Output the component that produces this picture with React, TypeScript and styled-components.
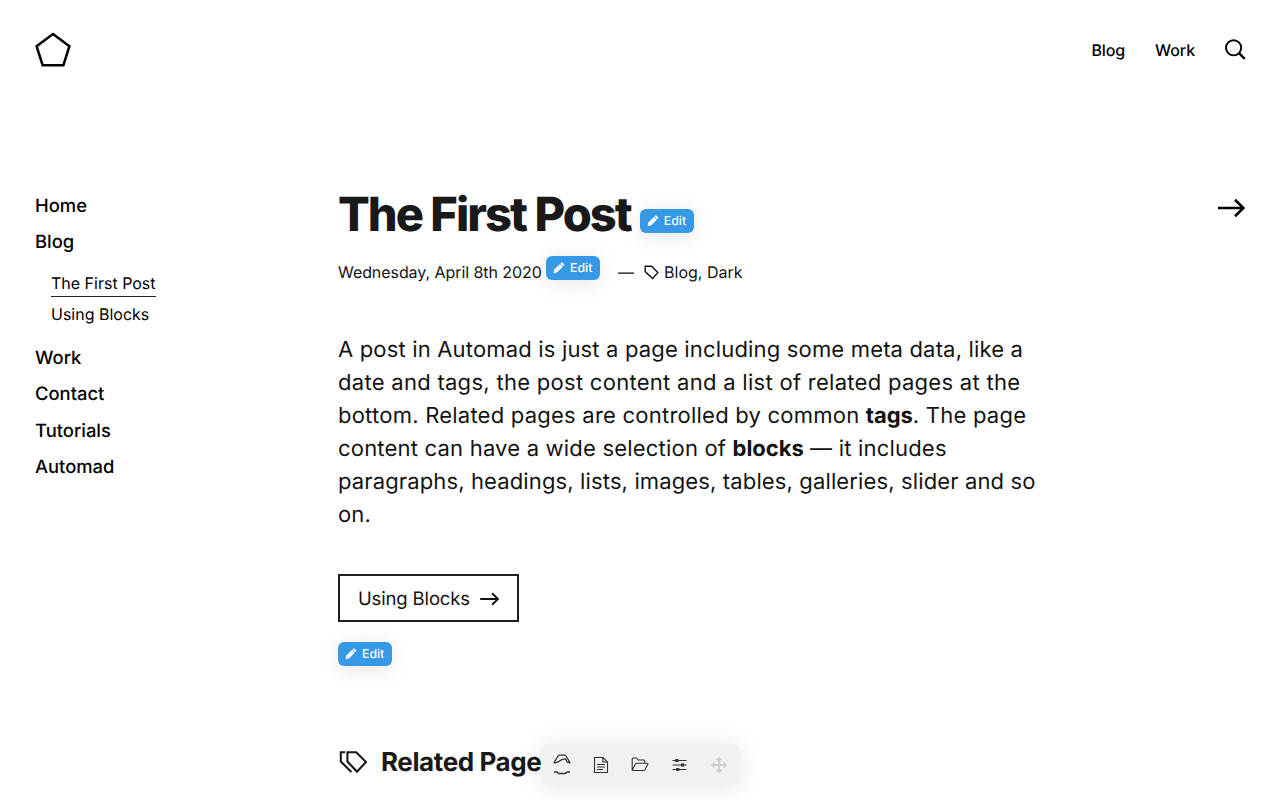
import React from "react";
import styled, { createGlobalStyle } from "styled-components";

const GlobalStyle = createGlobalStyle`
  *, *::before, *::after { box-sizing: border-box; }
  html, body { margin: 0; padding: 0; background: #fff; }
  body {
    font-family: Inter, "Liberation Sans", sans-serif;
    color: #121212;
    overflow: hidden;
    text-rendering: geometricPrecision;
    -webkit-font-smoothing: antialiased;
  }
  svg { display: block; flex: none; }
  h1, h2, p { margin: 0; }
  a { color: inherit; text-decoration: none; }
`;

const Page = styled.div`
  position: relative;
  height: 800px;
  overflow: hidden;
`;

const Navbar = styled.header`
  display: flex;
  align-items: center;
  justify-content: space-between;
  height: 99px;
  padding: 0 34px 0 35px;
`;

const NavLinks = styled.nav`
  display: flex;
  align-items: center;
  gap: 30px;
  font-size: 16px;
  font-weight: 450;
  letter-spacing: -0.1px;
  color: #000;

  a { padding-top: 1px; }
`;

const Columns = styled.div`
  display: flex;
  padding: 86px 34px 0 35px;
`;

const Sidebar = styled.nav`
  width: 303px;
  flex: none;
  padding-top: 3px;
  color: #000;
`;

const SideLink = styled.a`
  display: block;
  height: 36.4px;
  line-height: 37px;
  font-size: 18.4px;
  font-weight: 450;
`;

const SubList = styled.div`
  display: flex;
  flex-direction: column;
  align-items: flex-start;
  gap: 4px;
  padding: 9px 0 12px 16px;
`;

const SubLink = styled.a<{ $active?: boolean }>`
  height: 27px;
  line-height: 27px;
  font-size: 16px;
  border-bottom: 1px solid ${(p) => (p.$active ? "#222" : "transparent")};
`;

const Article = styled.main`
  width: 710px;
  flex: none;
`;

const Next = styled.a`
  margin-left: auto;
  padding-top: 12.5px;
  color: #000;
`;

const TitleRow = styled.div`
  display: flex;
  gap: 9px;
  height: 60px;
`;

const Title = styled.h1`
  font-size: 47px;
  line-height: 60px;
  font-weight: 800;
  letter-spacing: -1.95px;
  white-space: nowrap;
  color: #191919;
`;

const EditButton = styled.button<{ $top?: number }>`
  display: flex;
  align-items: center;
  gap: 5px;
  width: 54px;
  height: 24px;
  flex: none;
  margin: ${(p) => p.$top ?? 0}px 0 0;
  padding: 0 0 0 7px;
  border: 0;
  border-radius: 6px;
  background: #3699e5;
  box-shadow: 0 3px 22px rgba(0, 0, 0, 0.11);
  color: #fff;
  font: 500 12.3px/24px Inter, sans-serif;
  text-rendering: inherit;
`;

const Meta = styled.div`
  display: flex;
  height: 54px;
  font-size: 16px;
  line-height: 54px;
  white-space: nowrap;
`;

const PostDate = styled.span`
  letter-spacing: -0.07px;
`;

const Dash = styled.span`
  margin: 0 10px 0 18px;
`;

const Tags = styled.span`
  display: flex;
  align-items: center;
  gap: 5px;
`;

const Lead = styled.p`
  margin-top: 35px;
  font-size: 22px;
  line-height: 33px;

  strong { font-weight: 700; letter-spacing: -0.05px; }
`;

const Line = styled.span<{ $tracking: number }>`
  display: block;
  white-space: nowrap;
  letter-spacing: ${(p) => p.$tracking}px;
`;

const BlockButton = styled.a`
  display: flex;
  align-items: center;
  gap: 10px;
  width: 181px;
  height: 48px;
  margin: 42px 0 20px;
  padding: 1px 0 0 18px;
  border: 2px solid #1e1e1e;
  font-size: 18.5px;
  letter-spacing: -0.15px;
`;

const Related = styled.h2`
  display: flex;
  align-items: center;
  gap: 13px;
  margin-top: 76px;
  height: 40px;
  font-size: 26px;
  font-weight: 700;
  letter-spacing: -0.4px;
  white-space: nowrap;
  color: #191919;
`;

const Dock = styled.div`
  position: absolute;
  left: 541px;
  top: 744px;
  display: grid;
  grid-template-columns: repeat(5, 39.25px);
  justify-content: center;
  align-items: center;
  justify-items: center;
  width: 198.5px;
  height: 41px;
  border-radius: 8px;
  background: #f1f1f1;
  box-shadow: 0 2px 26px rgba(0, 0, 0, 0.11);
  color: #333;
`;

const Logo = () => (
  <svg width="36" height="36" viewBox="0 0 36 36" fill="none" stroke="#000" strokeWidth="2.5">
    <path d="M18 2 34.4 14.2 28.4 33.2H7.6L1.6 14.2Z" />
  </svg>
);

const SearchIcon = () => (
  <svg width="21" height="22" viewBox="0 0 21 22" fill="none" stroke="currentColor">
    <circle cx="8.6" cy="8.8" r="7.6" strokeWidth="1.9" />
    <path d="m14 14.2 5.7 5.6" strokeWidth="2.5" />
  </svg>
);

const ArrowIcon = ({ width, height }: { width: number; height: number }) => (
  <svg width={width} height={height} viewBox="0 0 28 20" fill="none" stroke="currentColor" strokeWidth="2.6">
    <path d="M0 10h26M17 1.8 25.4 10 17 18.2" />
  </svg>
);

const PencilIcon = () => (
  <svg width="12" height="12" viewBox="0 0 12 12" fill="currentColor">
    <path d="M1.3 7.4 7 1.9 9.8 4.7 4.2 10.2.6 11.2Z" />
    <path d="m7.5 1.4.6-.6q.8-.7 1.6 0l1.2 1.2q.7.8 0 1.6l-.6.6Z" />
  </svg>
);

const TagIcon = () => (
  <svg width="15" height="15" viewBox="0 0 15 15" fill="none" stroke="currentColor" strokeWidth="1.4">
    <path d="M1.2 1.2h6.4L13.8 7.6 8.6 13.4 1.2 6.6Z" />
  </svg>
);

const TagsIcon = () => (
  <svg width="30" height="24" viewBox="0 0 30 24" fill="none" stroke="currentColor" strokeWidth="2.1">
    <path d="M9.4 2.2h8.8L28 12 19 21.6 9.4 11.6Z" />
    <path d="M7 2.2H2.8v9.4L13.4 21.9" />
  </svg>
);

const AutomadIcon = () => (
  <svg width="18" height="21" viewBox="0 0 18 21" fill="none" stroke="currentColor" strokeWidth="1.3">
    <path
      d="M1 8.8 5 2q.5-.9 1.5-.9h5q1 0 1.5.9l4 6.8-2.7-.6-1.9-3.3Q8.5 5.3 6 7.3 3.8 9 1 8.8Z"
      strokeLinejoin="round"
    />
    <path d="M1 18h3l1.5 1.5h7L14 18h3" />
  </svg>
);

const FileIcon = () => (
  <svg width="16" height="18" viewBox="0 0 16 18" fill="none" stroke="currentColor" strokeWidth="1.1">
    <path d="M1.5 1.5H10l4.5 4.5v10.5h-13ZM9.8 1.5V6h4.7M4 8.5h8M4 11h8M4 13.5h6" />
  </svg>
);

const FolderIcon = () => (
  <svg width="18" height="15" viewBox="0 0 18 15" fill="none" stroke="currentColor" strokeWidth="1.1" strokeLinejoin="round">
    <path d="M1.2 13V2q0-1 1-1h3.3l1.6 2h5.7q1 0 1 1v2.2M1.2 13.3 4.4 6.9q.3-.7 1-.7h10.8q1.1 0 .6 1l-2.9 5.6q-.4.7-1.1.7H2Q1.2 13.5 1.2 13Z" />
  </svg>
);

const SettingsIcon = () => (
  <svg width="15" height="14" viewBox="0 0 15 14" fill="none" stroke="currentColor" strokeWidth="1.2">
    <path d="M.5 2.5h14M.5 7h14M.5 11.5h14" />
    <path d="M3.2 2.5h3.2M9 7h3.2M4.2 11.500h3.2" strokeWidth="3.2" />
  </svg>
);

const MoveIcon = () => (
  <svg width="16" height="16" viewBox="0 0 16 16" fill="none" stroke="#cfcfcf" strokeWidth="2">
    <path d="M8 1.5v13M1.5 8h13" />
    <path
      d="M5.6 3.4 8 1l2.4 2.4M5.6 12.6 8 15l2.4-2.4M3.4 5.6 1 8l2.4 2.4M12.6 5.6 15 8l-2.4 2.4"
      strokeWidth="1.7"
    />
  </svg>
);

const Edit = ({ top }: { top?: number }) => (
  <EditButton $top={top}>
    <PencilIcon />
    Edit
  </EditButton>
);

export default function App() {
  return (
    <>
      <GlobalStyle />
      <Page>
        <Navbar>
          <Logo />
          <NavLinks>
            <a>Blog</a>
            <a>Work</a>
            <SearchIcon />
          </NavLinks>
        </Navbar>
        <Columns>
          <Sidebar>
            <SideLink>Home</SideLink>
            <SideLink>Blog</SideLink>
            <SubList>
              <SubLink $active>The First Post</SubLink>
              <SubLink>Using Blocks</SubLink>
            </SubList>
            <SideLink>Work</SideLink>
            <SideLink>Contact</SideLink>
            <SideLink>Tutorials</SideLink>
            <SideLink>Automad</SideLink>
          </Sidebar>
          <Article>
            <TitleRow>
              <Title>The First Post</Title>
              <Edit top={24} />
            </TitleRow>
            <Meta>
              <PostDate>Wednesday, April 8th 2020&nbsp;</PostDate>
              <Edit top={11} />
              <Dash>—</Dash>
              <Tags>
                <TagIcon />
                Blog, Dark
              </Tags>
            </Meta>
            <Lead>
              <Line $tracking={0.17}>A post in Automad is just a page including some meta data, like a</Line>
              <Line $tracking={0.285}>date and tags, the post content and a list of related pages at the</Line>
              <Line $tracking={0.23}>
                bottom. Related pages are controlled by common <strong>tags</strong>. The page
              </Line>
              <Line $tracking={0.2}>
                content can have a wide selection of <strong>blocks</strong> — it includes
              </Line>
              <Line $tracking={0.13}>paragraphs, headings, lists, images, tables, galleries, slider and so</Line>
              <Line $tracking={0.13}>on.</Line>
            </Lead>
            <BlockButton>
              Using Blocks
              <ArrowIcon width={20} height={14} />
            </BlockButton>
            <Edit />
            <Related>
              <TagsIcon />
              Related Pages
            </Related>
          </Article>
          <Next>
            <ArrowIcon width={28} height={20} />
          </Next>
        </Columns>
        <Dock>
          <AutomadIcon />
          <FileIcon />
          <FolderIcon />
          <SettingsIcon />
          <MoveIcon />
        </Dock>
      </Page>
    </>
  );
}
